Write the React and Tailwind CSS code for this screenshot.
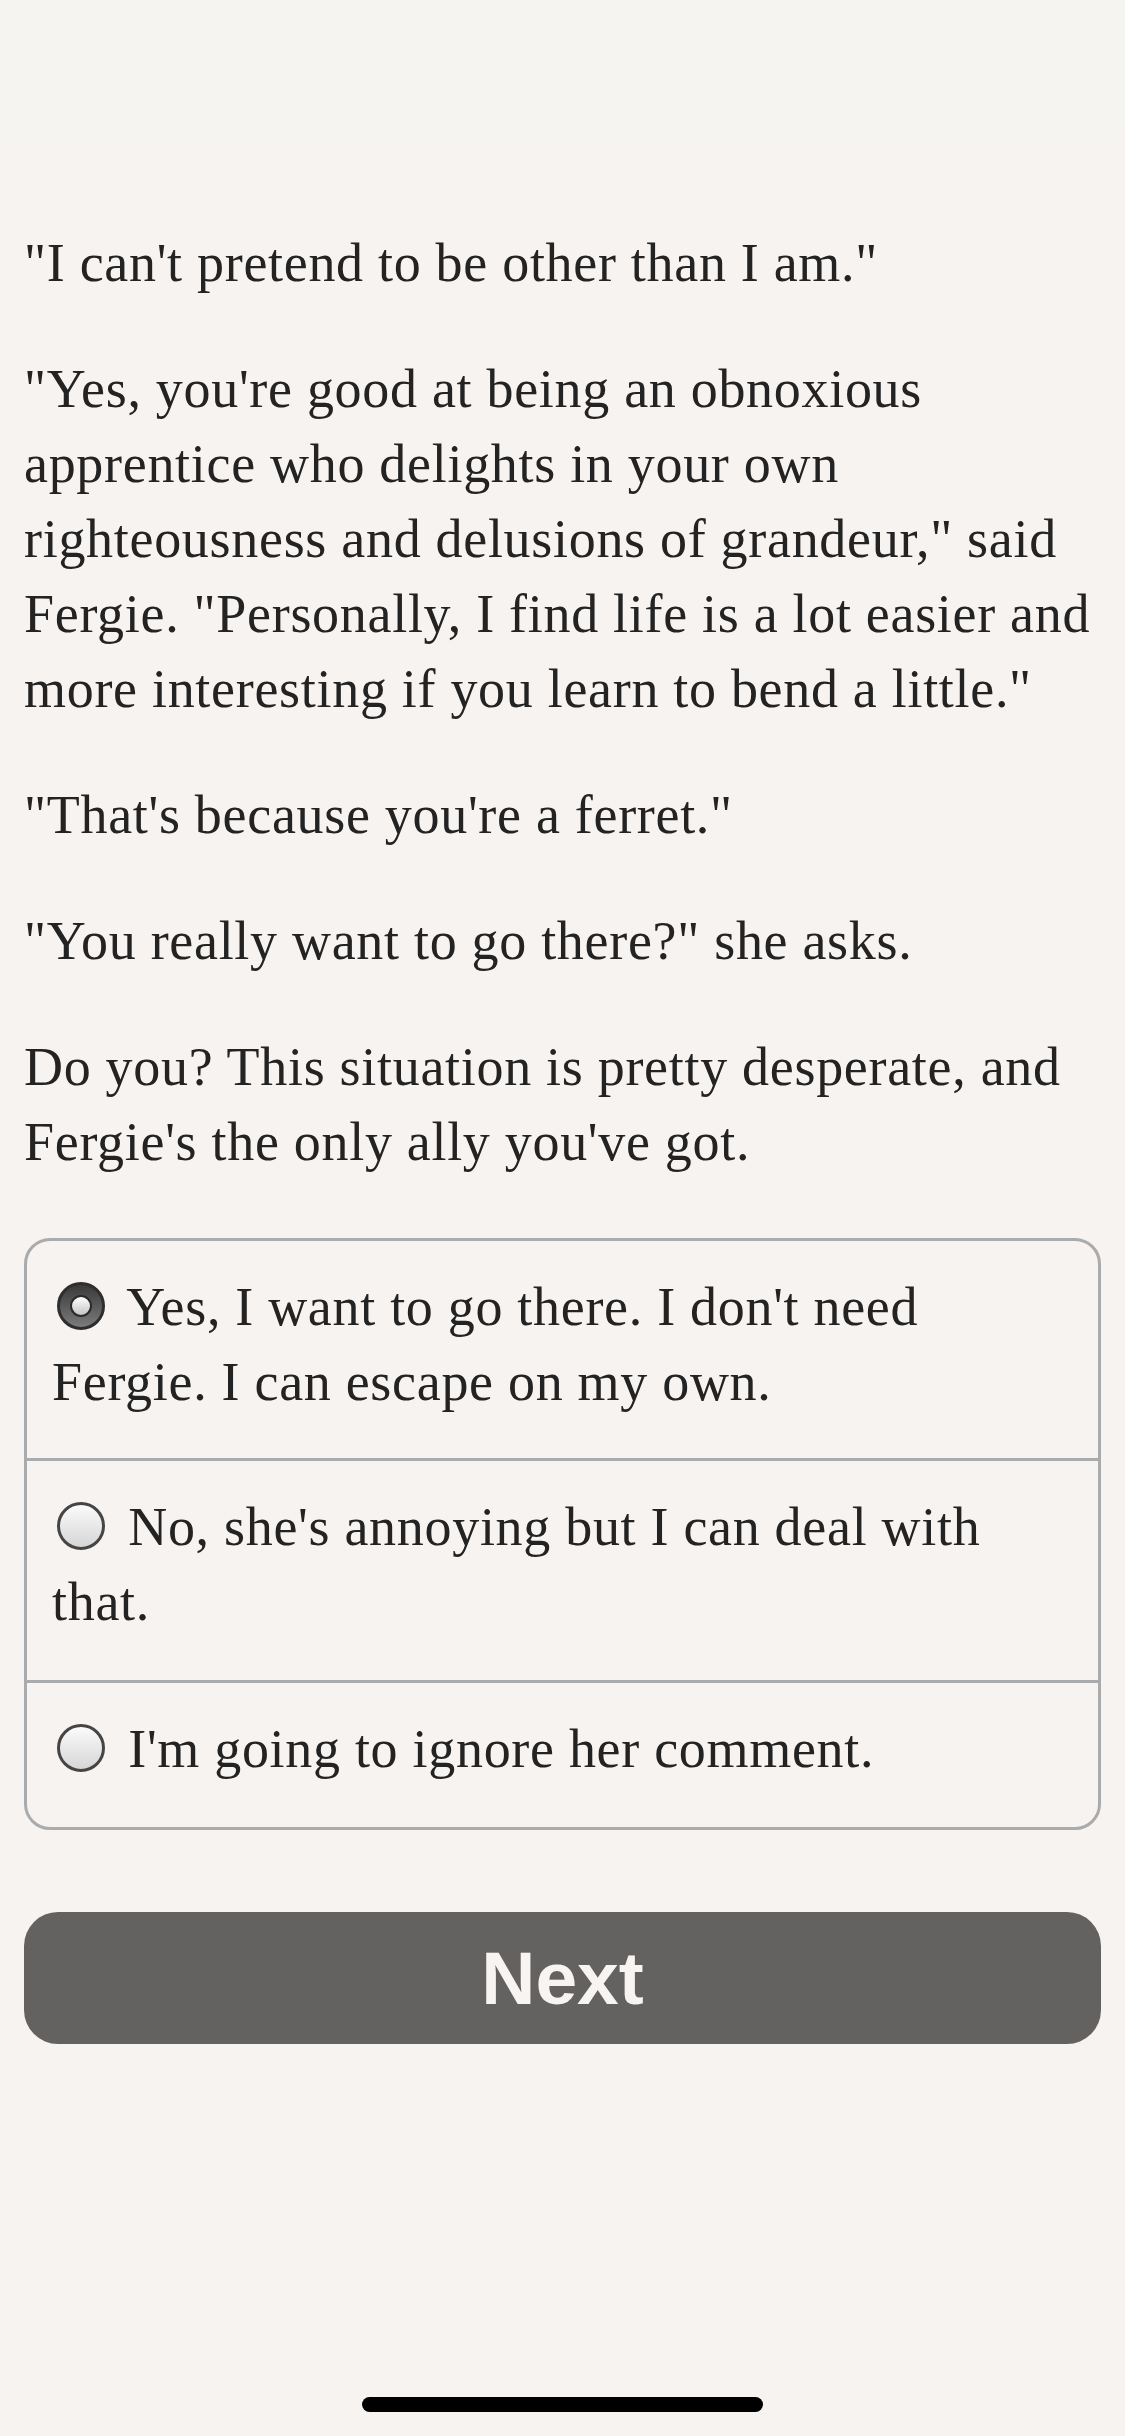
const paragraphs = [
  ['"I can\'t pretend to be other than I am."'],
  [
    '"Yes, you\'re good at being an obnoxious',
    "apprentice who delights in your own",
    'righteousness and delusions of grandeur," said',
    'Fergie. "Personally, I find life is a lot easier and',
    'more interesting if you learn to bend a little."',
  ],
  ['"That\'s because you\'re a ferret."'],
  ['"You really want to go there?" she asks.'],
  [
    "Do you? This situation is pretty desperate, and",
    "Fergie's the only ally you've got.",
  ],
];

const options = [
  { lines: ["Yes, I want to go there. I don't need", "Fergie. I can escape on my own."], checked: true },
  { lines: ["No, she's annoying but I can deal with", "that."], checked: false },
  { lines: ["I'm going to ignore her comment."], checked: false },
];

function Radio({ checked }) {
  if (checked) {
    return (
      <span className="ml-[5px] mr-[9px] inline-block h-[48px] w-[48px] rounded-full border-[3px] border-[#2e2e2e] bg-linear-to-b from-[#3a3a3a] to-[#7c7c7c] align-[-5px]">
        <span className="mx-auto mt-[10px] block h-[22px] w-[22px] rounded-full border-[2px] border-[#2a2a2a] bg-linear-to-b from-[#ffffff] to-[#c4c4c4]" />
      </span>
    );
  }
  return (
    <span className="ml-[5px] mr-[9px] inline-block h-[48px] w-[48px] rounded-full border-[3px] border-[#454545] bg-linear-to-b from-[#fbfbfb] to-[#d6d6d6] align-[-5px]" />
  );
}

export default function App() {
  return (
    <div className="flex min-h-[2436px] flex-col bg-[#f7f3f0] font-['Liberation_Serif',serif] text-[#232323]">
      {/* status bar area */}
      <div className="h-[140px] bg-[#f5f4f0]" />

      <main className="px-[24px] pt-[86px]">
        <div className="flex flex-col gap-[51px]">
          {paragraphs.map((lines, i) => (
            <p key={i} className="whitespace-nowrap text-[54px] leading-[75px] tracking-[0.7px]">
              {lines.map((l, j) => (
                <span key={j}>
                  {l}
                  {j < lines.length - 1 && <br />}
                </span>
              ))}
            </p>
          ))}
        </div>

        {/* choices */}
        <div className="mt-[58px] overflow-hidden rounded-[26px] border-[3px] border-[#a9abad]">
          {options.map((opt, i) => (
            <div
              key={i}
              className={`whitespace-nowrap px-[25px] pt-[29px] text-[54px] leading-[75px] tracking-[0.7px] ${
                i > 0 ? "border-t-[3px] border-[#a9abad] pb-[40px]" : "pb-[38px]"
              }`}
            >
              <Radio checked={opt.checked} />{" "}
              {opt.lines.map((l, j) => (
                <span key={j}>
                  {l}
                  {j < opt.lines.length - 1 && <br />}
                </span>
              ))}
            </div>
          ))}
        </div>

        <button className="mt-[82px] flex h-[132px] w-full items-center justify-center rounded-[34px] bg-[#636260] font-['Liberation_Sans',sans-serif] text-[75px] font-bold text-[#f7f4f1]">
          Next
        </button>
      </main>

      {/* home indicator */}
      <div className="mt-auto mb-[24px] flex justify-center">
        <div className="h-[15px] w-[401px] rounded-full bg-black" />
      </div>
    </div>
  );
}
